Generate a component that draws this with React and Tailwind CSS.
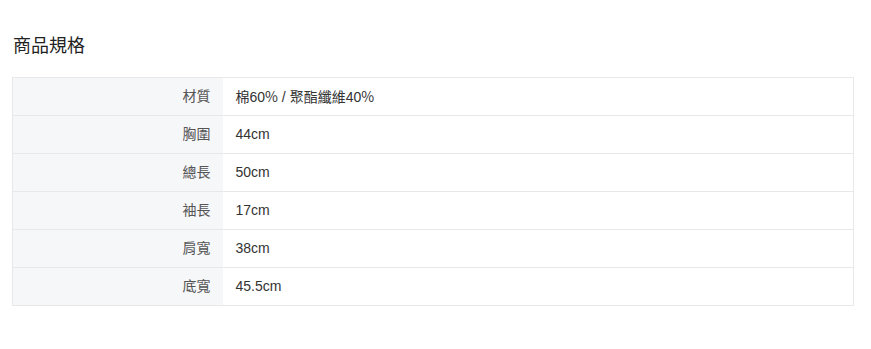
import React from "react";

const cjk = '"Noto Sans CJK TC", sans-serif';

const specs = [
  {
    label: "材質",
    value: (
      <>
        棉60<span style={{ fontFamily: cjk }}>%</span> / 聚酯纖維40
        <span style={{ fontFamily: cjk }}>%</span>
      </>
    ),
  },
  { label: "胸圍", value: "44cm" },
  { label: "總長", value: "50cm" },
  { label: "袖長", value: "17cm" },
  { label: "肩寬", value: "38cm" },
  { label: "底寬", value: "45.5cm" },
];

export default function App() {
  return (
    <div
      className="w-[871px] h-[349px] bg-white pl-3 pt-[34px]"
      style={{ fontFamily: '"Liberation Sans", "Noto Sans CJK TC", sans-serif' }}
    >
      <h2 className="text-[18px] leading-[24px] text-[#222] pl-px">商品規格</h2>
      <table className="mt-[19px] w-[842px] border-collapse border border-[#e8e8e8] text-[14px]">
        <tbody>
          {specs.map((item) => (
            <tr key={item.label} className="h-[38px] border-b border-[#e8e8e8]">
              <td className="w-[210px] bg-[#f6f7f9] text-right pr-3 text-[#555]">
                {item.label}
              </td>
              <td className="pl-[13px] text-[#333]">{item.value}</td>
            </tr>
          ))}
        </tbody>
      </table>
    </div>
  );
}
